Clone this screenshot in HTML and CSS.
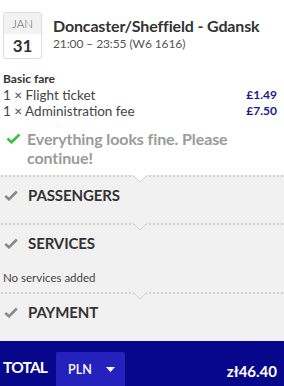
FILE: index.html
```html
<!DOCTYPE html>
<html>
<head>
<meta charset="utf-8">
<link rel="stylesheet" href="styles.css">
</head>
<body>
<div class="page">
  <div class="top">
    <div class="flight">
      <div class="date">
        <div class="month">JAN</div>
        <div class="day">31</div>
      </div>
      <div class="route">
        <div class="title">Doncaster/Sheffield - Gdansk</div>
        <div class="sub">21:00 – 23:55 (W6 1616)</div>
      </div>
    </div>
    <div class="fare">
      <div class="fare-head">Basic fare</div>
      <div class="fare-row"><span>1 × Flight ticket</span><span class="price">£1.49</span></div>
      <div class="fare-row"><span>1 × Administration fee</span><span class="price">£7.50</span></div>
    </div>
    <div class="ok">
      <svg class="ok-icon" width="15" height="11" viewBox="0 0 15 11"><path d="M1.5 5.5 L5.5 9.3 L13.5 1.5" fill="none" stroke="#3cbf3c" stroke-width="2.6"/></svg>
      <div class="ok-text">Everything looks fine. Please continue!</div>
    </div>
  </div>
  <div class="steps">
    <div class="step">
      <svg class="chev" width="16" height="8" viewBox="0 0 16 8"><path d="M0.5 0 L8 7 L15.5 0" fill="#fff" stroke="#d2d2d2" stroke-width="1"/></svg>
      <div class="step-head">
        <svg class="step-icon" width="14" height="11" viewBox="0 0 14 11"><path d="M1.2 6 L5 9.3 L12.8 1.5" fill="none" stroke="#8a8a8a" stroke-width="2.6"/></svg>
        <span>PASSENGERS</span>
      </div>
    </div>
    <div class="step step-with-body">
      <svg class="chev" width="16" height="8" viewBox="0 0 16 8"><path d="M0.5 0 L8 7 L15.5 0" fill="#f1f1f1" stroke="#d2d2d2" stroke-width="1"/></svg>
      <div class="step-head">
        <svg class="step-icon" width="14" height="11" viewBox="0 0 14 11"><path d="M1.2 6 L5 9.3 L12.8 1.5" fill="none" stroke="#8a8a8a" stroke-width="2.6"/></svg>
        <span>SERVICES</span>
      </div>
      <div class="step-body">No services added</div>
    </div>
    <div class="step">
      <svg class="chev" width="16" height="8" viewBox="0 0 16 8"><path d="M0.5 0 L8 7 L15.5 0" fill="#f1f1f1" stroke="#d2d2d2" stroke-width="1"/></svg>
      <div class="step-head">
        <svg class="step-icon" width="14" height="11" viewBox="0 0 14 11"><path d="M1.2 6 L5 9.3 L12.8 1.5" fill="none" stroke="#8a8a8a" stroke-width="2.6"/></svg>
        <span>PAYMENT</span>
      </div>
    </div>
  </div>
  <div class="total">
    <div class="total-label">TOTAL</div>
    <div class="currency">
      <span>PLN</span>
      <svg width="9" height="5" viewBox="0 0 9 5"><path d="M0 0 H9 L4.5 5 Z" fill="#fff"/></svg>
    </div>
    <div class="total-amount">zł46.40</div>
  </div>
</div>
</body>
</html>
```
FILE: styles.css
```css
html, body {
  margin: 0;
  padding: 0;
  background: #fff;
}
body {
  font-family: Lato, "Noto Sans", sans-serif;
  color: #333;
  width: 284px;
  height: 386px;
  overflow: hidden;
}
.page {
  display: flex;
  flex-direction: column;
  height: 386px;
}
.top {
  padding: 12px 7px 0 3px;
  height: 163px;
}
.flight {
  display: flex;
  gap: 11px;
}
.date {
  width: 37px;
  height: 45px;
  border: 1px solid #dcdcdc;
  border-radius: 3px;
  display: flex;
  flex-direction: column;
  overflow: hidden;
}
.month {
  height: 21px;
  background: #f2f2f2;
  font-size: 11.5px;
  font-weight: 300;
  color: #555;
  text-align: center;
  line-height: 22px;
}
.day {
  flex: 1;
  text-align: center;
  font-size: 17px;
  font-weight: 700;
  line-height: 24px;
  color: #333;
}
.route {
  padding-top: 5px;
}
.title {
  font-size: 16px;
  font-weight: 700;
  line-height: 18px;
  color: #333;
  letter-spacing: -0.15px;
}
.sub {
  font-size: 12px;
  line-height: 18px;
  color: #555;
  letter-spacing: -0.1px;
}
.fare {
  margin-top: 12px;
  font-size: 13.5px;
  line-height: 16px;
}
.fare-head {
  font-weight: 700;
  color: #333;
  font-size: 12px;
}
.fare-row {
  display: flex;
  justify-content: space-between;
  color: #444;
}
.price {
  color: #1b1b8a;
  font-weight: 700;
  font-size: 12px;
}
.ok {
  display: flex;
  gap: 6px;
  margin-top: 10px;
  padding-left: 3px;
}
.ok-icon {
  margin-top: 4px;
  flex: none;
}
.ok-text {
  font-size: 16px;
  font-weight: 700;
  line-height: 19px;
  color: #9a9a9a;
  letter-spacing: -0.1px;
}
.steps {
  background: #f1f1f1;
  flex: 1;
}
.step {
  position: relative;
  padding: 10px 7px 18px 4px;
  background-image: radial-gradient(circle, #d0d0d0 45%, transparent 55%);
  background-size: 4px 2px;
  background-repeat: repeat-x;
  background-position: 0 0;
}
.step-with-body {
  padding-bottom: 6px;
}
.chev {
  position: absolute;
  left: 132px;
  top: 0;
}
.step-head {
  display: flex;
  align-items: center;
  gap: 10px;
  height: 20px;
  font-size: 15px;
  font-weight: 700;
  color: #333;
  letter-spacing: -0.1px;
}
.step-icon {
  flex: none;
}
.step-body {
  margin: 17px 0 0 -1px;
  font-size: 11.5px;
  line-height: 16px;
  color: #444;
}
.total {
  height: 45px;
  background: #07078c;
  display: flex;
  align-items: flex-start;
  padding: 0 7px 0 3px;
  color: #fff;
}
.total-label {
  font-size: 15.5px;
  font-weight: 700;
  margin-top: 18px;
  line-height: 16px;
  letter-spacing: -0.8px;
}
.currency {
  margin: 11px 0 0 9px;
  width: 69px;
  height: 36px;
  background: #2421bd;
  border-radius: 2px;
  display: flex;
  align-items: center;
  gap: 14px;
  padding-left: 12px;
  box-sizing: border-box;
  font-size: 12.5px;
  font-weight: 600;
  padding-bottom: 1px;
}
.total-amount {
  margin-left: auto;
  margin-top: 22px;
  font-size: 15px;
  font-weight: 700;
  line-height: 16px;
}
```
